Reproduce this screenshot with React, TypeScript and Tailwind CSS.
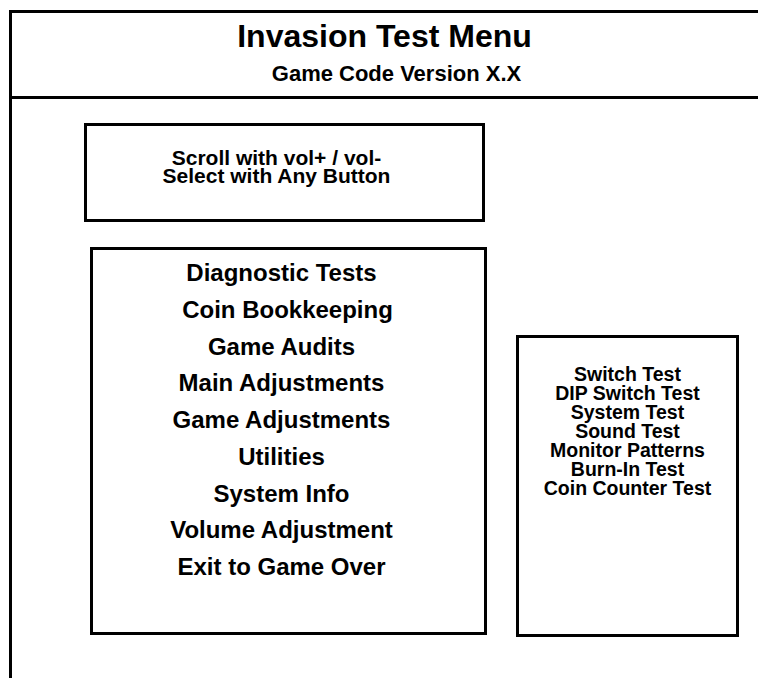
const MENU = [
  { label: "Diagnostic Tests", shift: "" },
  { label: "Coin Bookkeeping", shift: "pl-[12px]" },
  { label: "Game Audits", shift: "" },
  { label: "Main Adjustments", shift: "" },
  { label: "Game Adjustments", shift: "" },
  { label: "Utilities", shift: "" },
  { label: "System Info", shift: "" },
  { label: "Volume Adjustment", shift: "" },
  { label: "Exit to Game Over", shift: "" },
];

const TESTS = [
  "Switch Test",
  "DIP Switch Test",
  "System Test",
  "Sound Test",
  "Monitor Patterns",
  "Burn-In Test",
  "Coin Counter Test",
];

export default function App() {
  return (
    <div className="w-[758px] h-[678px] overflow-hidden bg-white text-black font-['Liberation_Sans',Arial,sans-serif] font-bold">
      {/* outer frame, runs off the right and bottom edge */}
      <div className="ml-[9px] mt-[10px] w-[760px] h-[680px] border-l-[3px] border-t-[3px] border-black">
        {/* header */}
        <div className="h-[86px] border-b-[3px] border-black flex flex-col items-center pr-[12px]">
          <h1 className="pt-[7px] text-[32px] leading-[32px]">Invasion Test Menu</h1>
          <p className="mt-[11px] pl-[24px] text-[22px] leading-[22px]">Game Code Version X.X</p>
        </div>

        {/* body */}
        <div className="flex items-start">
          <div className="ml-[72px] mt-[24px] flex flex-col">
            <div className="w-[401px] h-[99px] border-[3px] border-black pt-[23px] pr-[16px] text-center text-[21px] leading-[18px]">
              <p>Scroll with vol+ / vol-</p>
              <p>Select with Any Button</p>
            </div>

            <div className="ml-[6px] mt-[25px] w-[397px] h-[388px] border-[3px] border-black pt-[5px] pr-[14px] flex flex-col items-center">
              {MENU.map((m) => (
                <p key={m.label} className={`text-[24px] leading-[36.75px] ${m.shift}`}>
                  {m.label}
                </p>
              ))}
            </div>
          </div>

          <div className="ml-[29px] mt-[236px] w-[223px] h-[302px] border-[3px] border-black pt-[27px] flex flex-col items-center text-[19.5px] leading-[19px]">
            {TESTS.map((t) => (
              <p key={t}>{t}</p>
            ))}
          </div>
        </div>
      </div>
    </div>
  );
}
